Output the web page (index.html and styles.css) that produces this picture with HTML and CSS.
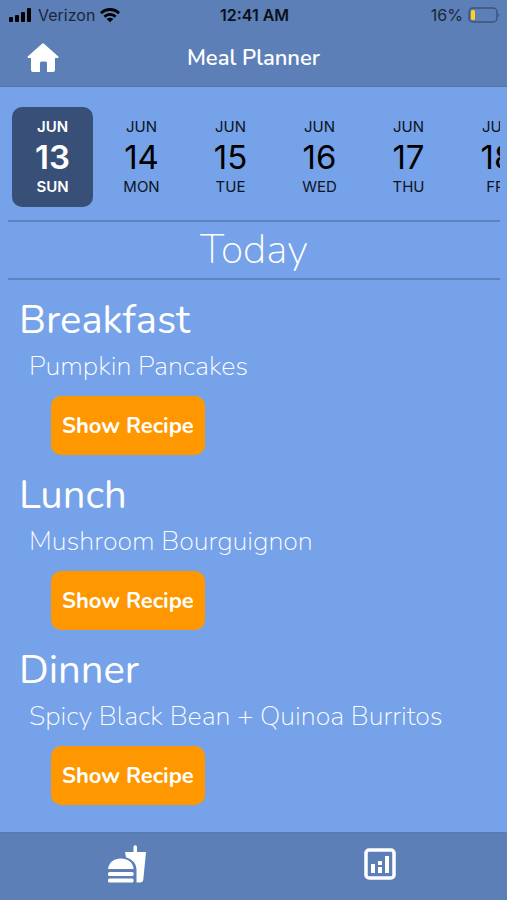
FILE: index.html
```html
<!DOCTYPE html>
<html lang="en">
<head>
    <meta charset="UTF-8">
    <meta name="viewport" content="width=device-width, initial-scale=1.0">
    <title>Meal Planner</title>
    <link rel="stylesheet" href="styles.css">
</head>
<body>
    <header class="header">
        <div class="status-bar">
            <div class="status-left">
                <svg width="24" height="16" viewBox="0 0 24 16" aria-hidden="true">
                    <rect x="0" y="10" width="4" height="5" rx="1"/>
                    <rect x="6" y="8" width="4" height="7" rx="1"/>
                    <rect x="12" y="5" width="4" height="10" rx="1"/>
                    <rect x="18" y="1" width="4" height="14" rx="1"/>
                </svg>
                <span>Verizon</span>
                <svg width="20" height="16" viewBox="0 0 20 16" aria-hidden="true">
                    <g fill="none" stroke="#000" stroke-width="2.8">
                        <path d="M1 6.2a12.8 12.8 0 0 1 18 0"/>
                        <path d="M4.4 9.7a8 8 0 0 1 11.2 0"/>
                    </g>
                    <path d="M10 15.3L6.7 12a4.7 4.7 0 0 1 6.6 0z"/>
                </svg>
            </div>
            <span class="time">12:41 AM</span>
            <div class="status-right">
                <span>16%</span>
                <svg width="32" height="16" viewBox="0 0 32 16" aria-hidden="true">
                    <rect x="1" y="1" width="28" height="14" rx="4" fill="none" stroke="#3d5478" stroke-width="1.5"/>
                    <rect x="3" y="3" width="4" height="10" rx="1.5" fill="#ffd21f"/>
                    <path d="M30.500 6q2 2 0 4z" fill="#3d5478"/>
                </svg>
            </div>
        </div>
        <nav class="title-bar">
            <a href="#" aria-label="Home">
                <svg width="32" height="30" viewBox="0 0 32 30" fill="#fff">
                    <path d="M15 .7q1-.9 2 0L31.300 13.400q.7 1.400-.7 1.600H28v12q0 2-2 2h-6v-9q0-1.500-1.500-1.500h-4Q13 18.500 13 20v9H6q-2 0-2-2V15H1.400Q0 14.800.7 13.400z"/>
                </svg>
            </a>
            <h1>Meal Planner</h1>
        </nav>
    </header>

    <main>
        <!-- Date strip -->
        <div class="dates">
            <button class="date selected"><span>JUN</span><strong>13</strong><span>SUN</span></button>
            <button class="date"><span>JUN</span><strong>14</strong><span>MON</span></button>
            <button class="date"><span>JUN</span><strong>15</strong><span>TUE</span></button>
            <button class="date"><span>JUN</span><strong>16</strong><span>WED</span></button>
            <button class="date"><span>JUN</span><strong>17</strong><span>THU</span></button>
            <button class="date"><span>JUN</span><strong>18</strong><span>FRI</span></button>
        </div>

        <h2 class="day">Today</h2>

        <!-- Meals -->
        <section class="meal">
            <h3>Breakfast</h3>
            <p>Pumpkin Pancakes</p>
            <button class="recipe-btn">Show Recipe</button>
        </section>
        <section class="meal">
            <h3>Lunch</h3>
            <p>Mushroom Bourguignon</p>
            <button class="recipe-btn">Show Recipe</button>
        </section>
        <section class="meal">
            <h3>Dinner</h3>
            <p>Spicy Black Bean + Quinoa Burritos</p>
            <button class="recipe-btn">Show Recipe</button>
        </section>
    </main>

    <nav class="tab-bar">
        <a href="#" aria-label="Meals">
            <svg width="38" height="38" viewBox="0 0 38 38" fill="#fff">
                <path d="M0 24C1 17 6 13.500 12.800 13.500S25 17 25.600 24z"/>
                <rect x="0" y="27" width="25.600" height="4" rx="1.500"/>
                <rect x="0" y="33.500" width="25.600" height="4" rx="1.500"/>
                <path d="M17 7h8.500V2q0-1.800 1.700-1.800T29 2v5h9l-2.700 27.500q-.3 3-3.300 3h-3.500V24q-.5-8.500-10.500-11.800z"/>
            </svg>
        </a>
        <a href="#" aria-label="Stats">
            <svg width="32" height="32" viewBox="0 0 32 32" fill="#fff">
                <rect x="2" y="2" width="28" height="28" rx="3" fill="none" stroke="#fff" stroke-width="3.500"/>
                <path d="M7 16h4v9H7zM14 13h4v4h-4zM14 19h4v6h-4zM21 8h4v17h-4z"/>
            </svg>
        </a>
    </nav>
</body>
</html>
```
FILE: styles.css
```css
* {
    box-sizing: border-box;
}
body {
    margin: 0;
    min-height: 100vh;
    display: flex;
    flex-direction: column;
    font-family: Nunito, "Open Sans", sans-serif;
    background-color: #75a2e9;
    color: #fff;
}
h1, h2, h3, p {
    margin: 0;
}
button {
    border: none;
    cursor: pointer;
}
svg {
    display: block;
}
.header {
    background-color: #5c7fb8;
    border-bottom: 1px solid #5273a8;
}
.status-bar {
    display: grid;
    grid-template-columns: 1fr auto 1fr;
    align-items: center;
    height: 30px;
    padding: 0 7px 0 9px;
    font-family: Inter, sans-serif;
    font-size: 16px;
    color: #1b2638;
}
.status-left, .status-right {
    display: flex;
    align-items: center;
    gap: 5px;
}
.status-right {
    justify-content: flex-end;
}
.time {
    font-weight: 600;
    color: #0b111b;
}
.title-bar {
    display: grid;
    grid-template-columns: 1fr auto 1fr;
    align-items: center;
    height: 56px;
    padding: 0 27px;
}
.title-bar h1 {
    font-size: 22px;
    font-weight: 600;
}
main {
    flex: 1;
    padding: 20px 7px 0 8px;
}
.dates {
    display: flex;
    gap: 8px;
    padding-left: 4px;
    margin-bottom: 13px;
    overflow: hidden;
}
.date {
    flex: none;
    display: flex;
    flex-direction: column;
    align-items: center;
    justify-content: center;
    width: 81px;
    height: 100px;
    padding: 0;
    border-radius: 10px;
    background: none;
    font-family: Inter, sans-serif;
    font-size: 15px;
    font-weight: 400;
    line-height: 20px;
    color: #0b1422;
}
.date strong {
    font-size: 33px;
    font-weight: 400;
    line-height: 40px;
    color: #000;
}
.date.selected {
    background-color: #384f77;
    font-weight: 500;
}
.date.selected, .date.selected strong {
    color: #fff;
    font-weight: 600;
}
.day {
    border-top: 2px solid #5c82bf;
    border-bottom: 2px solid #5c82bf;
    font-size: 41px;
    font-weight: 200;
    line-height: 56px;
    text-align: center;
}
.meal {
    height: 175px;
    padding-left: 11px;
}
.day + .meal {
    margin-top: 12px;
}
.meal h3 {
    font-size: 40px;
    font-weight: 400;
    line-height: 56px;
}
.meal p {
    padding-left: 10px;
    font-size: 27px;
    font-weight: 200;
    line-height: 38px;
}
.recipe-btn {
    height: 59px;
    margin: 10px 0 0 32px;
    padding: 0 11px;
    border-radius: 10px;
    background-color: #ff9800;
    color: #fff;
    font-family: inherit;
    font-size: 22px;
    font-weight: 700;
}
.tab-bar {
    display: flex;
    height: 68px;
    background-color: #5c7fb8;
    border-top: 1px solid #587ab2;
}
.tab-bar a {
    flex: 1;
    display: flex;
    align-items: center;
    justify-content: center;
    padding-bottom: 6px;
}
```
